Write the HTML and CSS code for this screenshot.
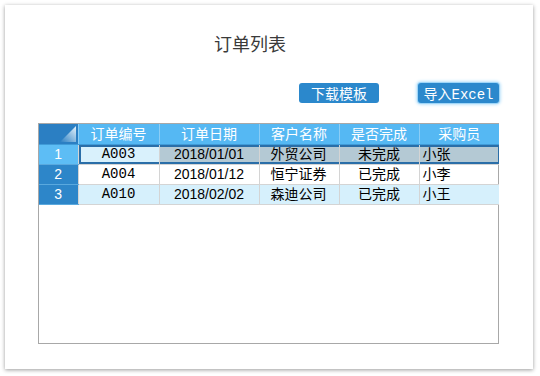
FILE: index.html
```html
<!DOCTYPE html>
<html lang="zh-CN">
<head>
    <meta charset="UTF-8">
    <title>订单列表</title>
<link rel="stylesheet" href="styles.css">
</head>
<body>
    <div class="card">
        <h1 class="title">订单列表</h1>
        <div class="toolbar">
            <button class="btn">下载模板</button>
            <button class="btn btn-focus">导入<span class="mono">Excel</span></button>
        </div>
        <div class="sheet">
            <table class="grid">
                <colgroup>
                    <col style="width:39px">
                    <col style="width:81px">
                    <col style="width:100px">
                    <col style="width:80px">
                    <col style="width:80px">
                    <col style="width:80px">
                </colgroup>
                <thead>
                    <tr>
                        <th class="corner">
                            <svg width="16" height="16" viewBox="0 0 16 16">
                                <defs>
                                    <linearGradient id="tri" x1="0" y1="1" x2="1" y2="0">
                                        <stop offset="0" stop-color="#2b7fc3"/>
                                        <stop offset="1" stop-color="#e6f3fb"/>
                                    </linearGradient>
                                </defs>
                                <polygon points="16,0 16,16 0,16" fill="url(#tri)"/>
                            </svg>
                        </th>
                        <th>订单编号</th>
                        <th>订单日期</th>
                        <th>客户名称</th>
                        <th>是否完成</th>
                        <th>采购员</th>
                    </tr>
                </thead>
                <tbody>
                    <tr class="selected">
                        <td class="rowhead active-head">1</td>
                        <td class="mono center active first">A003</td>
                        <td class="center">2018/01/01</td>
                        <td class="pad">外贸公司</td>
                        <td class="center">未完成</td>
                        <td class="left last">小张</td>
                    </tr>
                    <tr>
                        <td class="rowhead">2</td>
                        <td class="mono center">A004</td>
                        <td class="center">2018/01/12</td>
                        <td class="pad">恒宁证券</td>
                        <td class="center">已完成</td>
                        <td class="left">小李</td>
                    </tr>
                    <tr class="alt">
                        <td class="rowhead">3</td>
                        <td class="mono center">A010</td>
                        <td class="center">2018/02/02</td>
                        <td class="pad">森迪公司</td>
                        <td class="center">已完成</td>
                        <td class="left">小王</td>
                    </tr>
                </tbody>
            </table>
        </div>
    </div>
</body>
</html>
```

FILE: styles.css
```css
body {
    margin: 0;
    padding: 5px;
    background: #fff;
    font-family: "Liberation Sans", "Noto Sans CJK SC", sans-serif;
}
.card {
    width: 528px;
    height: 364px;
    background: #fff;
    box-shadow: 0 1px 4px rgba(0, 0, 0, 0.4);
    padding-left: 33px;
    box-sizing: border-box;
}
.title {
    margin: 0;
    padding: 26px 71px 0 0;
    font-family: "Noto Sans CJK SC", serif;
    font-weight: normal;
    font-size: 18px;
    line-height: 24px;
    color: #3a3a3a;
    text-align: center;
}
.toolbar {
    display: flex;
    justify-content: flex-end;
    gap: 39px;
    margin-top: 28px;
    padding-right: 34px;
}
.btn {
    width: 80px;
    height: 20px;
    padding: 0;
    border: none;
    border-radius: 3px;
    background: #2b88cc;
    color: #fff;
    font-family: "Noto Sans CJK SC", sans-serif;
    font-size: 14px;
    line-height: 20px;
}
.btn-focus {
    width: 81px;
    box-shadow: 0 0 0 1px #9fd6f8, 0 0 3px 2px #bfe4fb;
}
.btn .mono {
    font-size: 14px;
}
.mono {
    font-family: "Liberation Mono", "Noto Sans CJK SC", monospace;
}
.sheet {
    width: 461px;
    height: 221px;
    margin-top: 20px;
    border: 1px solid #a8a8a8;
    box-sizing: border-box;
}
.grid {
    border-collapse: collapse;
    table-layout: fixed;
    width: 460px;
    font-size: 14px;
}
.grid th,
.grid td {
    height: 20px;
    padding: 0;
    line-height: 19px;
    box-sizing: border-box;
    white-space: nowrap;
    overflow: hidden;
}
.grid th {
    background: #55b8f3;
    color: #fff;
    font-weight: normal;
    font-family: "Noto Sans CJK SC", sans-serif;
    border-right: 1px solid #8ccdf5;
    border-bottom: 1px solid #3f9bd8;
    text-align: center;
}
.grid th:last-child {
    border-right: none;
}
.grid .corner {
    background: #2b7fc3;
    text-align: right;
    vertical-align: bottom;
    padding: 0 2px 2px 0;
    line-height: 0;
}
.grid td {
    color: #000;
    border-right: 1px solid #d4d4d4;
    border-bottom: 1px solid #d4d4d4;
    font-family: "Liberation Sans", "Noto Sans CJK SC", sans-serif;
}
.grid td:last-child {
    border-right: none;
}
.grid td.mono {
    font-family: "Liberation Mono", monospace;
    font-size: 14px;
}
.rowhead {
    background: #2d86c9;
    color: #fff !important;
    text-align: center;
    border-bottom: 1px solid #5aa9de !important;
}
.rowhead.active-head {
    background: #5dbdf5;
}
.center {
    text-align: center;
}
.pad {
    padding-left: 11px !important;
}
.left {
    padding-left: 3px !important;
}
.alt td {
    background: #d6f0fc;
}
.alt td.rowhead {
    background: #2d86c9;
}
.selected td {
    background: #b4c9d4;
    box-shadow: inset 0 2px #2a6ea8, inset 0 -2px #2a6ea8;
}
.selected td.rowhead {
    box-shadow: none;
}
.selected td.active {
    background: #d9f1fc;
}
.selected td.first {
    box-shadow: inset 0 2px #2a6ea8, inset 0 -2px #2a6ea8, inset 2px 0 #2a6ea8;
}
.selected td.last {
    box-shadow: inset 0 2px #2a6ea8, inset 0 -2px #2a6ea8, inset -1px 0 #2a6ea8;
}
```
